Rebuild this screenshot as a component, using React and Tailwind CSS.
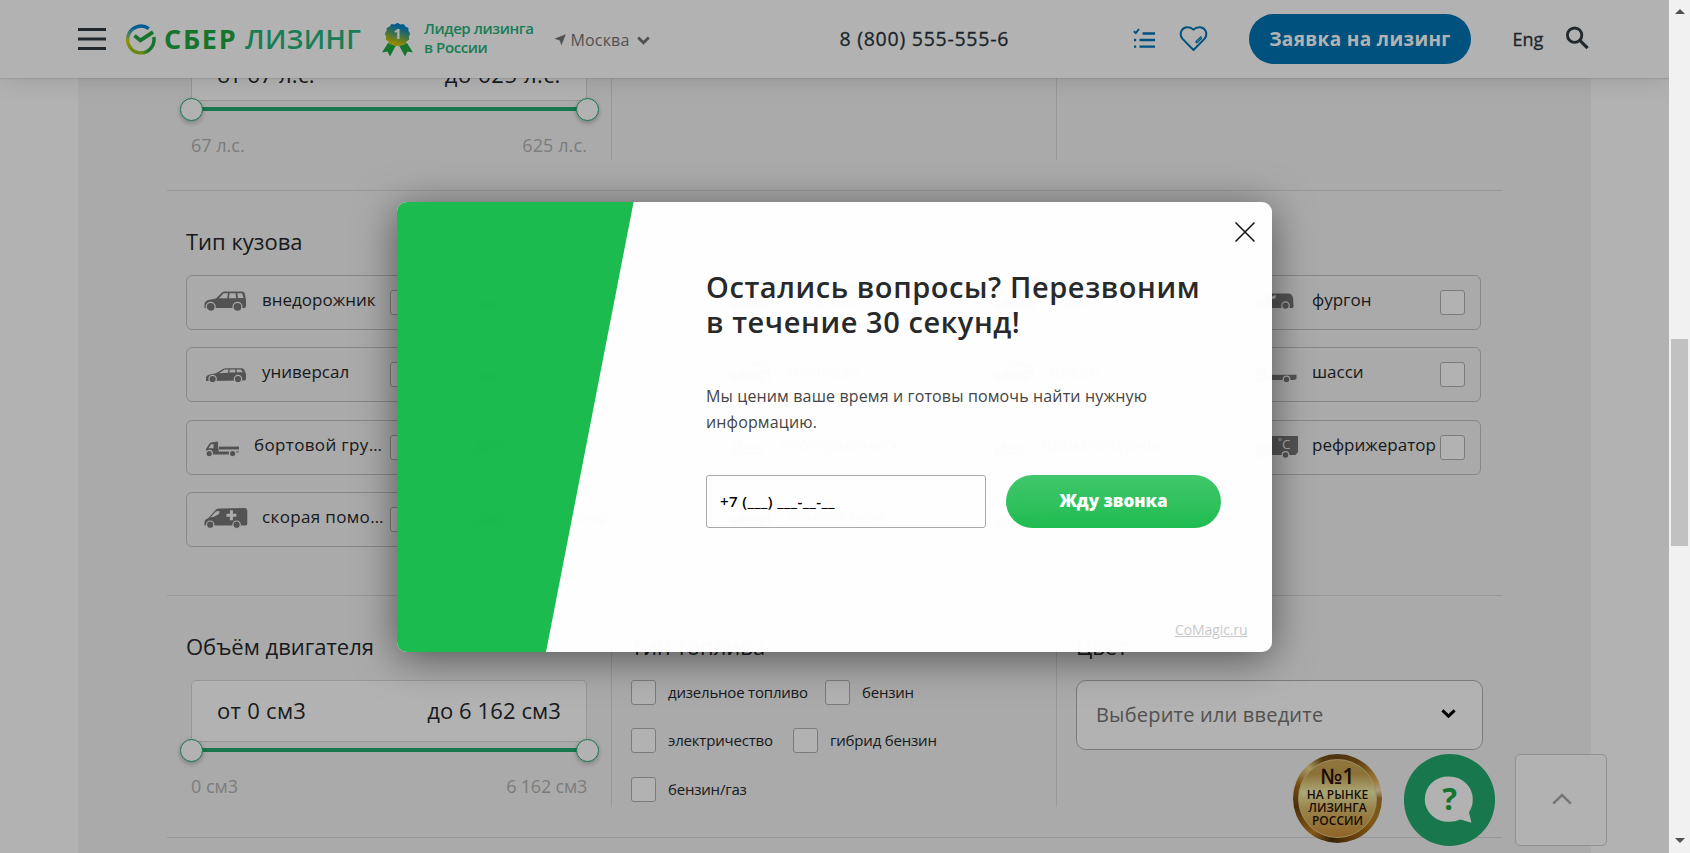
import React from "react";

/* ---------- vehicle silhouettes ---------- */

function Wheels({ a, b, y, r = 3.9 }) {
  return (
    <g fill="#787878" stroke="#f4f4f4" strokeWidth="1.2">
      <circle cx={a} cy={y} r={r + 0.6} />
      <circle cx={b} cy={y} r={r + 0.6} />
    </g>
  );
}

function Vehicle({ kind }) {
  const shapes = {
    suv: (
      <>
        <path d="M0.5 17V12.5Q1 10 4 9L12 7.5L18 1.5Q19 .5 21 .4H38Q40 .5 40.6 2L42 9V15Q42 17 40 17Z" />
        <path d="M15 7.2L19.6 2.2H24L23.2 7.2ZM25.6 2.2H31.6L32.2 7.2H24.9ZM33.4 2.2H38L39.6 7H34Z" fill="#f4f4f4" />
        <Wheels a={6.7} b={33.5} y={15.8} />
      </>
    ),
    wagon: (
      <>
        <path d="M2 18V14Q3 11.5 12 10.3L19 6Q20 5.4 22 5.3H38Q40 5.4 40.8 8L42 11V16Q42 17.5 40 17.5Z" />
        <path d="M15 10.2L20.6 6.6H24.5L24 9.8ZM25.8 6.6H31L31.6 9.5H25.3ZM32.4 6.6H36.8L39 9.2H33Z" fill="#f4f4f4" />
        <Wheels a={8.6} b={34} y={16} r={3.1} />
      </>
    ),
    flatbed: (
      <>
        <path d="M2 18.5V13L5.5 7.6Q6.2 6.4 8 6.2L14 5.6V13H34.5V16.5H32V18.5Z" />
        <path d="M4.5 12.2L7 8.2H9.5V12.2ZM14.6 13.4V15.4H34.6V13.6H14.6Z" fill="#f4f4f4" />
        <path d="M14.8 10.6H35V13H14.8Z" />
        <Wheels a={5.2} b={28.6} y={17.6} r={2.6} />
      </>
    ),
    ambulance: (
      <>
        <path d="M.5 17.5V13.5Q1 11.5 5 9.5L11 2.4Q12.4 .7 15 .6L41 0Q43.2 .2 43.3 3V16Q43 17.5 41.5 17.5Z" />
        <path d="M6.5 9.6L11.8 3.6Q12.6 3 15.6 3L15 6L10 8.8ZM25.9 2.2H28.9V5.7H32.4V8.7H28.9V12.2H25.9V8.7H22.4V5.7H25.9Z" fill="#f4f4f4" />
        <Wheels a={6.2} b={32.6} y={16.7} r={3.1} />
      </>
    ),
    van: (
      <>
        <path d="M1 17V13Q2 10 7 9L13 4Q14.5 2.6 17 2.6H34Q38 2.6 39 7L39.6 16Q39 17 38 17Z" />
        <path d="M16 8.2Q17.5 4.2 22 4.2L21.5 7.5Z" fill="#f4f4f4" />
        <Wheels a={7} b={31.5} y={14.6} r={3.1} />
      </>
    ),
    chassis: (
      <>
        <path d="M1 17V10L5 4H12V11.8H42.5V16L40 17Z" />
        <Wheels a={6} b={32.5} y={16.4} r={2.7} />
      </>
    ),
    reefer: (
      <>
        <path d="M1 18V12L5 7H16V0H44V16L41.5 19H1Z" />
        <text x="24" y="13" fontSize="13.5" fill="#f4f4f4" className="font-['Open_Sans',sans-serif]">˚C</text>
        <Wheels a={6} b={31.5} y={19} r={2.7} />
      </>
    ),
  };
  return (
    <svg width="44" height="24" viewBox="0 0 44 24" fill="#787878" className="block shrink-0 overflow-visible">
      {shapes[kind]}
    </svg>
  );
}

/* ---------- small parts ---------- */

const Box = () => <span className="block h-[25px] w-[25px] shrink-0 rounded-[3px] border border-[#b2b2b2] bg-white" />;

function BodyCard({ kind, label, narrow }) {
  const clipped = label.endsWith("…");
  return (
    <div className="flex h-[55px] items-start rounded-[6px] border border-[#c2c2c2] pl-[17px]">
      <div className={narrow ? "mt-[15px] w-[50px]" : "mt-[15px] w-[58px]"}>
        <Vehicle kind={kind} />
      </div>
      <span
        className={`mt-[12px] block shrink-0 whitespace-nowrap text-[17px] leading-[24px] text-[#24282b] ${clipped ? "tracking-[0.35px]" : ""} ${narrow ? "w-[136px]" : "w-[128px]"}`}
      >
        {label}
      </span>
      <div className="mt-[14px]">
        <Box />
      </div>
    </div>
  );
}

function RangeSlider({ from, to, min, max, lowered }) {
  return (
    <div className="w-[396px]">
      <div className={`flex h-[62px] items-center justify-between rounded-t-[5px] border border-[#d8d8d8] bg-white px-[25px] text-[22px] text-[#24282b] ${lowered ? "pt-[9px]" : "pb-[1px]"}`}>
        <span className="tracking-[0.3px]">{from}</span>
        <span className={lowered ? "tracking-[0.6px]" : "tracking-[0.1px]"}>{to}</span>
      </div>
      <div className="-mx-[11.5px] -mt-[4px] flex h-[24px] items-center">
        <span className="z-[1] block h-[23px] w-[23px] rounded-full border border-[#23ab6d] bg-white shadow-[0_2px_5px_rgba(0,0,0,0.25)]" />
        <span className="-mx-[2px] block h-[4px] flex-1 bg-[#23ab6d]" />
        <span className="z-[1] block h-[23px] w-[23px] rounded-full border border-[#23ab6d] bg-white shadow-[0_2px_5px_rgba(0,0,0,0.25)]" />
      </div>
      <div className="mt-[10px] flex justify-between text-[18px] leading-[28px] text-[#b2b2b2]">
        <span>{min}</span>
        <span className={lowered ? "tracking-[0.1px]" : "tracking-[-0.2px]"}>{max}</span>
      </div>
    </div>
  );
}

function Fuel({ label, width }) {
  return (
    <label className={`flex items-center ${width}`}>
      <Box />
      <span className="-mt-[1px] ml-[12px] whitespace-nowrap text-[15px] leading-[24px] tracking-[-0.2px] text-[#24282b]">{label}</span>
    </label>
  );
}

const Title = ({ children }) => <h3 className="h-[36px] text-[22px] leading-[34px] text-[#24282b]">{children}</h3>;

/* ---------- header ---------- */

function Header() {
  return (
    <header className="relative z-10 flex h-[78px] shrink-0 items-start bg-white shadow-[0_1px_1px_rgba(0,0,0,0.08),0_4px_24px_rgba(0,0,0,0.1)]">
      <svg className="ml-[78px] mt-[28px] block" width="28" height="22" viewBox="0 0 28 22" fill="#303c44">
        <path d="M0 0H28V3H0ZM0 9.5H28V12.5H0ZM0 19H28V22H0Z" />
      </svg>
      <svg className="ml-[19px] mt-[24px] block" width="31" height="31" viewBox="0 0 31 31" fill="none">
        <defs>
          <linearGradient id="ring" x1="0.6" y1="0" x2="0.4" y2="1">
            <stop offset="0.1" stopColor="#0085d8" />
            <stop offset="0.38" stopColor="#5fb4a0" />
            <stop offset="0.66" stopColor="#d6d000" />
            <stop offset="1" stopColor="#8cc020" />
          </linearGradient>
          <linearGradient id="ringTail" x1="0" y1="1" x2="0.9" y2="0.3">
            <stop offset="0" stopColor="#b4c818" />
            <stop offset="0.5" stopColor="#1fa83f" />
          </linearGradient>
        </defs>
        <path d="M23.8 4.6A13.4 13.4 0 1 0 16 28.9" stroke="url(#ring)" strokeWidth="3.4" />
        <path d="M15 28.9A13.4 13.4 0 0 0 28.8 13" stroke="url(#ringTail)" strokeWidth="3.4" />
        <path d="M9.5 11.6L15.4 16.4L28 8.2" stroke="#1fa83f" strokeWidth="3.8" />
      </svg>
      <div className="ml-[8px] mt-[21px] flex h-[36px] items-center whitespace-nowrap text-[27px] leading-[36px]">
        <span className="w-[81px] font-bold tracking-[1.7px] text-[#1fa83f]">СБЕР</span>
        <span className="w-[117px] font-semibold tracking-[0.4px] text-[#25b47b]">ЛИЗИНГ</span>
      </div>
      <svg className="ml-[20px] mt-[22px] block" width="31" height="35" viewBox="0 0 31 35">
        <defs>
          <linearGradient id="medal" x1="0.65" y1="0" x2="0.35" y2="1">
            <stop offset="0.15" stopColor="#0085d0" />
            <stop offset="0.5" stopColor="#5aa36a" />
            <stop offset="0.85" stopColor="#c8c400" />
          </linearGradient>
        </defs>
        <path d="M6 21L0 30.5L5.5 29.6L8 34.5L13.6 24ZM25 21L31 30.5L25.5 29.6L23 34.5L17.4 24Z" fill="#1fa83f" />
        <path d="M15.5 .8L18.4 2.4L21.6 2L23.4 4.6L26.4 5.9L26.5 9L28.2 11.6L26.9 14.4L27.2 17.6L24.6 19.4L23.2 22.2L20 22.5L17.4 24.4L15.5 23.6L13.4 24.4L10.8 22.6L7.7 22.2L6.3 19.4L3.8 17.6L4.1 14.4L2.8 11.6L4.5 9L4.7 5.9L7.6 4.6L9.4 2L12.6 2.4Z" fill="url(#medal)" />
        <text x="15.6" y="17.2" textAnchor="middle" fontSize="14" fontWeight="700" fill="#fff" className="font-['Open_Sans',sans-serif]">1</text>
      </svg>
      <div className="ml-[11px] mt-[19px] w-[130px] whitespace-nowrap text-[15px] font-semibold leading-[19px] tracking-[-0.4px] text-[#25b47b]">
        <div>Лидер лизинга</div>
        <div>в России</div>
      </div>
      <div className="mt-[28px] flex h-[24px] items-center text-[#757575]">
        <svg width="12" height="12" viewBox="0 0 12 12" className="block" fill="#757575">
          <path d="M11.8 .2L7.4 11.6L5.8 6.4L.4 4.8Z" />
        </svg>
        <span className="ml-[4.5px] w-[66.5px] text-[16px] leading-[24px] tracking-[0.15px]">Москва</span>
        <svg width="13" height="9" viewBox="0 0 13 9" fill="none" stroke="#757575" strokeWidth="2.8" className="block">
          <path d="M1.2 1.4L6.5 6.8L11.8 1.4" />
        </svg>
      </div>
      <span className="ml-[189.5px] mt-[25.5px] w-[293px] whitespace-nowrap text-[19.5px] leading-[26px] tracking-[0.75px] text-[#26323a] [-webkit-text-stroke:0.3px_#303c44]">8 (800) 555-555-6</span>
      <svg className="mt-[28px] block" width="23" height="21" viewBox="0 0 23 21" fill="none" stroke="#0075b5" strokeWidth="2">
        <path d="M.8 3.2L2.8 5L6 1" />
        <path d="M9.5 5.5H22M6.5 12H22M6.5 18.7H22M1 12H3.2M1 18.7H3.2" strokeWidth="2.3" />
      </svg>
      <svg className="ml-[23px] mt-[25px] block" width="29" height="27" viewBox="0 0 29 27" fill="none" stroke="#0075b5" strokeWidth="2" strokeLinejoin="round" strokeLinecap="round">
        <path d="M14.5 25L3.3 13.6Q1 10.6 2 7Q3.4 2.6 8 2.2Q12 2 14.5 4.6Q17 2 21 2.2Q25.6 2.6 27 7Q28 10.6 25.7 13.6Z" />
        <path d="M22 11.6L17 16.4Q16.8 17.8 18.4 17.4L22.6 13.2" strokeWidth="1.3" />
      </svg>
      <div className="ml-[41.5px] mt-[14px] flex h-[50px] w-[222px] items-center justify-center rounded-full bg-[#0075b5] text-[19px] font-bold tracking-[0.35px] text-white">
        <span className="whitespace-nowrap">Заявка на лизинг</span>
      </div>
      <span className="ml-[41.5px] mt-[25.5px] w-[53px] text-[18px] leading-[26px] text-[#26323a] [-webkit-text-stroke:0.3px_#303c44]">Eng</span>
      <svg className="mt-[26px] block" width="24" height="24" viewBox="0 0 24 24" fill="none" stroke="#303c44" strokeWidth="2.8">
        <circle cx="8.6" cy="9.2" r="7.2" />
        <path d="M13.8 14.4L21.6 22.2" strokeWidth="3.2" />
      </svg>
    </header>
  );
}

/* ---------- catalogue filter ---------- */

const BODIES = [
  ["suv", "внедорожник"],
  ["wagon", "хэтчбек"],
  ["van", "микроавтобус"],
  ["wagon", "седан"],
  ["van", "фургон"],
  ["wagon", "универсал"],
  ["wagon", "купе"],
  ["suv", "минивэн"],
  ["suv", "пикап"],
  ["chassis", "шасси"],
  ["flatbed", "бортовой гру…", true],
  ["van", "автобус"],
  ["flatbed", "изотермическ…", true],
  ["flatbed", "промтоварны…", true],
  ["reefer", "рефрижератор"],
  ["ambulance", "скорая помо…"],
  ["suv", "кроссовер"],
  ["suv", "компактвэн"],
  ["wagon", "лифтбек"],
];

function Filters() {
  return (
    <main className="mx-[78px] h-[775px] w-[1513px] overflow-hidden bg-[#f4f4f4] px-[89px]">
      <section className="h-[113px] border-b border-[#dadada]">
        <div className="flex h-[82px]">
          <div className="w-[445px] border-r border-[#dadada] pl-[24px]">
            <div className="-mt-[39px]">
              <RangeSlider from="от 67 л.с." to="до 625 л.с." min="67 л.с." max="625 л.с." lowered />
            </div>
          </div>
          <div className="w-[445px] border-r border-[#dadada]" />
        </div>
      </section>

      <section className="h-[405px] border-b border-[#dadada] px-[19px] pt-[33px]">
        <Title>Тип кузова</Title>
        <div className="mt-[15px] grid grid-cols-[repeat(5,245px)] gap-x-[17.5px] gap-y-[17.4px]">
          {BODIES.map(([kind, label, narrow]) => (
            <BodyCard key={label} kind={kind} label={label} narrow={narrow} />
          ))}
        </div>
      </section>

      <section className="h-[242px] border-b border-[#dadada] pt-[33px]">
        <div className="flex h-[178px]">
          <div className="w-[445px] border-r border-[#dadada] pl-[19px]">
            <Title>Объём двигателя</Title>
            <div className="ml-[5px] mt-[15px]">
              <RangeSlider from="от 0 см3" to="до 6 162 см3" min="0 см3" max="6 162 см3" />
            </div>
          </div>
          <div className="w-[445px] border-r border-[#dadada] pl-[19px]">
            <Title>Тип топлива</Title>
            <div className="mt-[15px] flex flex-col gap-[23px]">
              <div className="flex">
                <Fuel label="дизельное топливо" width="w-[194px]" />
                <Fuel label="бензин" width="w-[100px]" />
              </div>
              <div className="flex">
                <Fuel label="электричество" width="w-[162px]" />
                <Fuel label="гибрид бензин" width="w-[160px]" />
              </div>
              <div className="pt-[1px]">
                <Fuel label="бензин/газ" width="w-[160px]" />
              </div>
            </div>
          </div>
          <div className="pl-[19px]">
            <Title>Цвет</Title>
            <div className="mt-[15px] flex h-[70px] w-[407px] items-center justify-between rounded-[10px] border border-[#b2b2b2] bg-white pl-[19px] pr-[26px]">
              <span className="text-[20px] leading-[28px] tracking-[0.2px] text-[#757575]">Выберите или введите</span>
              <svg width="15" height="10" viewBox="0 0 15 10" fill="none" stroke="#000" strokeWidth="3" className="-mt-[2px] block">
                <path d="M1.4 1.4L7.5 7.2L13.6 1.4" />
              </svg>
            </div>
          </div>
        </div>
      </section>
    </main>
  );
}

/* ---------- floating widgets ---------- */

function Widgets() {
  return (
    <div className="absolute left-[1293px] top-[754px] z-20 flex items-start">
      <div className="flex h-[89px] w-[89px] items-center justify-center rounded-full bg-[conic-gradient(from_0deg,#6e4a14,#8a5c18_8%,#e0b050_18%,#f4e0b8_22%,#a87a30_25%,#b8801c_35%,#8a5410_45%,#503008_52%,#c08020_60%,#6e4210_72%,#a86c14_80%,#f0dc90_88%,#7a5214_94%,#6e4a14)]">
        <div className="flex h-[79px] w-[79px] flex-col items-center rounded-full border border-[#e6cc90] bg-[linear-gradient(180deg,#cfab58_0%,#c9a350_18%,#f4f0ac_42%,#dcc070_62%,#cf9038_100%)] pt-[5px] font-semibold text-[#2a1206]">
          <span className="text-[21.5px] leading-[22px]">№1</span>
          <span className="mt-[2px] whitespace-nowrap text-center text-[12px] leading-[12.8px]">
            НА РЫНКЕ
            <br />
            ЛИЗИНГА
            <br />
            РОССИИ
          </span>
        </div>
      </div>
      <div className="ml-[22px] flex h-[92px] w-[91px] items-center justify-center rounded-full bg-[#23ab6d]">
        <svg width="50" height="50" viewBox="0 0 50 50" className="-mt-[1px] block overflow-visible">
          <path d="M24.5 1.5A23.2 22.7 0 1 0 24.5 46.8Q30 46.8 35.4 44.6L46.4 47.7L44 37.2Q47.8 31.6 47.8 24.2A23.3 22.7 0 0 0 24.5 1.5Z" fill="#fff" />
          <text x="24.6" y="35" textAnchor="middle" fontSize="31" fontWeight="700" fill="#1fa83f" className="font-['Open_Sans',sans-serif]">?</text>
        </svg>
      </div>
      <div className="ml-[20px] flex h-[92px] w-[92px] items-center justify-center rounded-[5px] border border-[#d0d0d0] bg-white">
        <svg width="20" height="12" viewBox="0 0 20 12" fill="none" stroke="#aaa" strokeWidth="2.6" className="-mt-[2px] ml-[1px] block">
          <path d="M1.2 10.6L10 2L18.8 10.6" />
        </svg>
      </div>
    </div>
  );
}

/* ---------- call-back dialog ---------- */

function Dialog() {
  return (
    <div className="absolute left-[397px] top-[202px] z-40 flex h-[450px] w-[875px] overflow-hidden rounded-[10px] bg-white opacity-[0.99]">
      <svg width="238" height="450" viewBox="0 0 238 450" className="block shrink-0">
        <path d="M0 0H236.6L149 450H0Z" fill="#1bbc4f" />
      </svg>
      <div className="ml-[71px] w-[516px] pt-[67px]">
        <h2 className="whitespace-nowrap text-[29px] font-semibold leading-[35px] tracking-[0.58px] text-[#27282a]">
          Остались вопросы? Перезвоним
          <br />в течение 30 секунд!
        </h2>
        <p className="mt-[43.5px] whitespace-nowrap text-[16px] leading-[26px] tracking-[0.14px] text-[#444]">
          Мы ценим ваше время и готовы помочь найти нужную
          <br />
          информацию.
        </p>
        <div className="mt-[40.5px] flex">
          <div className="flex h-[53px] w-[280px] items-center rounded-[3px] border border-[#a9a9a9] pb-[1px] pl-[13px] text-[15px] font-semibold tracking-[0.4px] text-black">
            <span>+7 (___) ___-__-__</span>
          </div>
          <div className="ml-[20px] flex h-[53px] w-[215px] items-center justify-center rounded-full bg-gradient-to-b from-[#3fc86c] to-[#1dbd50] pb-[1px] text-[17px] font-extrabold text-white">
            <span>Жду звонка</span>
          </div>
        </div>
        <div className="mt-[91px] pl-[469px] text-[14px] leading-[22px] tracking-[-0.1px] text-[#c9c9c9] underline">CoMagic.ru</div>
      </div>
      <svg width="20" height="20" viewBox="0 0 20 20" className="ml-[13px] mt-[20px] block" stroke="#111" strokeWidth="1.5">
        <path d="M.5 .5L19.5 19.5M19.5 .5L.5 19.5" />
      </svg>
    </div>
  );
}

function Scrollbar() {
  return (
    <div className="flex h-[853px] w-[21px] flex-col items-center bg-[#f1f1f1]">
      <svg width="10" height="5" viewBox="0 0 10 5" className="mt-[9px] block" fill="#505050">
        <path d="M5 0L10 5H0Z" />
      </svg>
      <div className="mt-[325px] h-[207px] w-[17px] bg-[#c1c1c1]" />
      <svg width="10" height="5" viewBox="0 0 10 5" className="mt-[292px] block" fill="#505050">
        <path d="M0 0H10L5 5Z" />
      </svg>
    </div>
  );
}

export default function App() {
  return (
    <div className="flex h-[853px] w-[1690px] overflow-hidden bg-white font-['Open_Sans','Noto_Sans',sans-serif]">
      <div className="relative flex h-[853px] w-[1669px] flex-col overflow-hidden bg-white">
        <Header />
        <Filters />
        <Widgets />
        <div className="absolute inset-0 z-30 bg-black/30" />
        <div className="absolute left-[397px] top-[202px] z-30 h-[450px] w-[875px] rounded-[10px] shadow-[0_6px_40px_rgba(0,0,0,0.5)]" />
        <Dialog />
      </div>
      <Scrollbar />
    </div>
  );
}
